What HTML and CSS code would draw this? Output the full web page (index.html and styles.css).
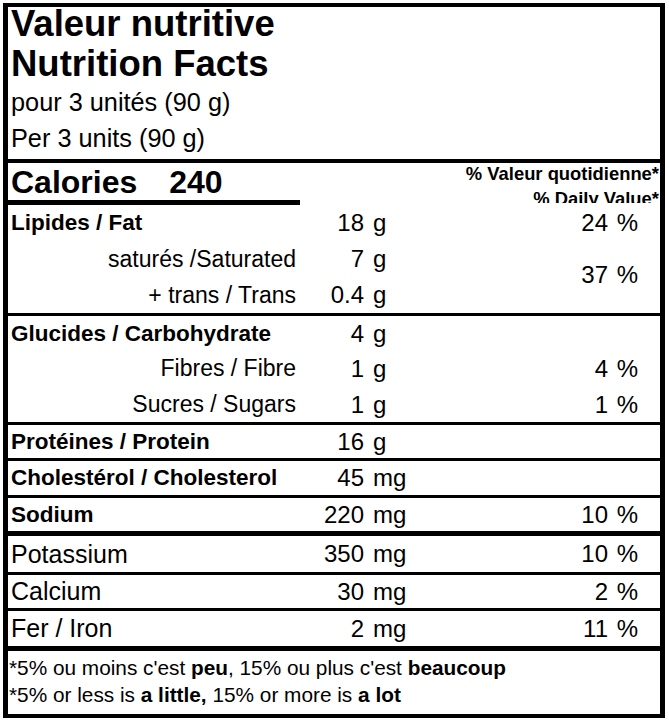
FILE: index.html
```html
<!DOCTYPE html>
<html lang="fr">
<head>
<meta charset="utf-8">
<title>Valeur nutritive / Nutrition Facts</title>
<link rel="stylesheet" href="styles.css">
</head>
<body>
<div class="label">
  <header class="head">
    <h1 class="title">Valeur nutritive<br>Nutrition Facts</h1>
    <p class="serving">pour 3 unités (90 g)</p>
    <p class="serving">Per 3 units (90 g)</p>
  </header>

  <div class="cal-row">
    <div class="cal">Calories <span class="cal-num">240</span></div>
    <div class="dv-head">% Valeur quotidienne*<br>% Daily Value*</div>
  </div>

  <section class="group fat">
    <div class="name bold">Lipides / Fat</div>
    <div class="num">18</div><div class="unit">g</div><div class="pct">24 %</div>
    <div class="name sub">saturés /Saturated</div>
    <div class="num">7</div><div class="unit">g</div><div class="pct span2">37 %</div>
    <div class="name sub">+ trans / Trans</div>
    <div class="num">0.4</div><div class="unit">g</div>
  </section>

  <section class="group carb">
    <div class="name bold">Glucides / Carbohydrate</div>
    <div class="num">4</div><div class="unit">g</div><div class="pct"></div>
    <div class="name sub">Fibres / Fibre</div>
    <div class="num">1</div><div class="unit">g</div><div class="pct">4 %</div>
    <div class="name sub">Sucres / Sugars</div>
    <div class="num">1</div><div class="unit">g</div><div class="pct">1 %</div>
  </section>

  <section class="group protein">
    <div class="name bold">Protéines / Protein</div>
    <div class="num">16</div><div class="unit">g</div><div class="pct"></div>
  </section>

  <section class="group chol">
    <div class="name bold">Cholestérol / Cholesterol</div>
    <div class="num">45</div><div class="unit">mg</div><div class="pct"></div>
  </section>

  <section class="group sodium">
    <div class="name bold">Sodium</div>
    <div class="num">220</div><div class="unit">mg</div><div class="pct">10 %</div>
  </section>

  <section class="group mineral potassium">
    <div class="name">Potassium</div>
    <div class="num">350</div><div class="unit">mg</div><div class="pct">10 %</div>
  </section>

  <section class="group mineral calcium">
    <div class="name">Calcium</div>
    <div class="num">30</div><div class="unit">mg</div><div class="pct">2 %</div>
  </section>

  <section class="group mineral iron">
    <div class="name">Fer / Iron</div>
    <div class="num">2</div><div class="unit">mg</div><div class="pct">11 %</div>
  </section>

  <footer class="foot">
    <p>*5% ou moins c'est <b>peu</b>, 15% ou plus c'est <b>beaucoup</b></p>
    <p>*5% or less is <b>a little,</b> 15% or more is <b>a lot</b></p>
  </footer>
</div>
</body>
</html>
```

FILE: styles.css
```css
html, body {
  margin: 0;
  padding: 0;
  background: #fff;
}

body {
  padding: 3px;
  font-family: "Liberation Sans", Arial, sans-serif;
  color: #000;
}

.label {
  width: 662px;
  height: 715px;
  box-sizing: border-box;
  border-style: solid;
  border-color: #000;
  border-width: 4px 5px;
  overflow: hidden;
}

/* header */
.head {
  display: flow-root;
  height: 152px;
  border-bottom: 4px solid #000;
  padding-left: 3px;
}

.title {
  margin: -3px 0 0;
  font-size: 36.5px;
  line-height: 40px;
  font-weight: bold;
}

.serving {
  margin: 0;
  font-size: 25.3px;
  line-height: 36px;
}

/* calories */
.cal-row {
  display: grid;
  grid-template-columns: 292px 1fr;
  height: 42px;
}

.cal {
  height: 37px;
  line-height: 38px;
  border-bottom: 5px solid #000;
  padding-left: 3px;
  font-size: 32px;
  font-weight: bold;
  white-space: nowrap;
}

.cal-num {
  margin-left: 23px;
}

.dv-head {
  height: 42px;
  margin-top: -2px;
  overflow: hidden;
  text-align: right;
  padding-right: 1px;
  font-size: 18.4px;
  line-height: 25px;
  font-weight: bold;
}

/* nutrient groups */
.group {
  display: grid;
  grid-template-columns: 288px 68px 60px 1fr;
  font-size: 22.5px;
  border-bottom: 3px solid #000;
}

.fat { grid-template-rows: repeat(3, 36px); line-height: 36px; }
.carb { grid-template-rows: repeat(3, 35.33px); line-height: 35.33px; }
.protein { grid-template-rows: 33px; line-height: 33px; }
.chol { grid-template-rows: 34px; line-height: 34px; }
.sodium { grid-template-rows: 33px; line-height: 33px; border-bottom-width: 5px; }
.potassium { grid-template-rows: 36px; line-height: 36px; }
.calcium { grid-template-rows: 33px; line-height: 33px; }
.iron { grid-template-rows: 35px; line-height: 35px; border-bottom-width: 5px; }

.name {
  padding-left: 3px;
  white-space: nowrap;
}

.name.bold {
  font-weight: bold;
}

.name.sub {
  text-align: right;
  padding-left: 0;
  font-size: 23px;
}

.mineral .name {
  font-size: 25px;
}

.num,
.unit,
.pct {
  font-size: 24px;
  white-space: nowrap;
}

.num {
  text-align: right;
}

.unit {
  padding-left: 9px;
}

.pct {
  text-align: right;
  padding-right: 22px;
  word-spacing: 2px;
}

.pct.span2 {
  grid-row: span 2;
  align-self: center;
  line-height: 30px;
  margin-top: -4px;
}

/* footnote */
.foot {
  padding: 3px 0 0 1px;
  font-size: 20.8px;
  line-height: 27px;
}

.foot p {
  margin: 0;
  white-space: nowrap;
}
```
